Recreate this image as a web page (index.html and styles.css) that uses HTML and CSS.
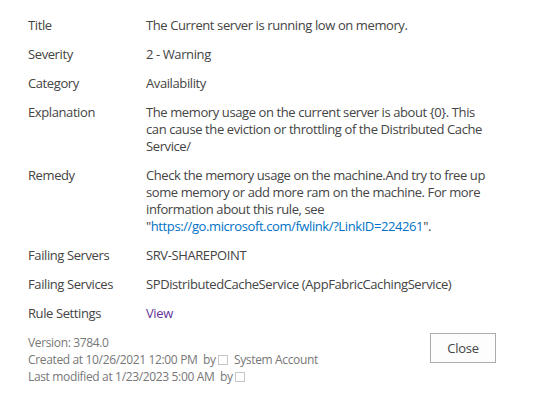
FILE: index.html
```html
<!doctype html>
<html>
<head>
    <meta charset="utf-8">
    <title>Rule Details</title>
    <link rel="stylesheet" href="styles.css">
</head>
<body>
<div class="dlg">
    <table class="props">
        <tr>
            <td class="lbl">Title</td>
            <td class="val">The Current server is running low on memory.</td>
        </tr>
        <tr>
            <td class="lbl">Severity</td>
            <td class="val">2 - Warning</td>
        </tr>
        <tr>
            <td class="lbl">Category</td>
            <td class="val">Availability</td>
        </tr>
        <tr>
            <td class="lbl">Explanation</td>
            <td class="val">The memory usage on the current server is about {0}. This can cause the eviction or throttling of the Distributed Cache Service/</td>
        </tr>
        <tr>
            <td class="lbl">Remedy</td>
            <td class="val">Check the memory usage on the machine.And try to free up some memory or add more ram on the machine. For more information about this rule, see "<a class="link" href="#">https://go.microsoft.com/fwlink/?LinkID=224261</a>".</td>
        </tr>
        <tr>
            <td class="lbl">Failing Servers</td>
            <td class="val">SRV-SHAREPOINT</td>
        </tr>
        <tr>
            <td class="lbl">Failing Services</td>
            <td class="val">SPDistributedCacheService (AppFabricCachingService)</td>
        </tr>
        <tr>
            <td class="lbl">Rule Settings</td>
            <td class="val"><a class="visited" href="#">View</a></td>
        </tr>
    </table>

    <div class="foot">
        <div class="meta">
            <div>Version: 3784.0</div>
            <div>Created at 10/26/2021 12:00 PM &nbsp;by <span class="chk"></span>&nbsp; System Account</div>
            <div>Last modified at 1/23/2023 5:00 AM &nbsp;by <span class="chk"></span></div>
        </div>
        <button class="btn">Close</button>
    </div>
</div>
</body>
</html>
```

FILE: styles.css
```css
*{
    margin:0;
    padding:0;
}
body{
    background:#fff;
    font-family:"Open Sans","Noto Sans",sans-serif;
    color:#444;
}
.dlg{
    width:468px;
    padding:11px 42px 0 28px;
}
.props{
    border-collapse:collapse;
    width:100%;
    font-size:13px;
    line-height:17px;
    letter-spacing:-0.4px;
}
.props td{
    padding:6px 0;
    vertical-align:top;
}
.lbl{
    width:118px;
    color:#444;
}
.val{
    color:#444;
}
.link{
    color:#0072c6;
    text-decoration:none;
}
.visited{
    color:#663399;
    text-decoration:none;
}
.foot{
    display:flex;
    justify-content:space-between;
    align-items:flex-start;
    margin-top:6px;
}
.meta{
    font-size:12px;
    line-height:17px;
    letter-spacing:-0.35px;
    color:#777;
}
.chk{
    display:inline-block;
    width:8px;
    height:8px;
    border:1px solid #c6c6c6;
    vertical-align:-1px;
}
.btn{
    width:66px;
    height:30px;
    margin-top:-1px;
    background:#fdfdfd;
    border:1px solid #ababab;
    font-family:inherit;
    font-size:13px;
    letter-spacing:-0.3px;
    color:#444;
}
```
